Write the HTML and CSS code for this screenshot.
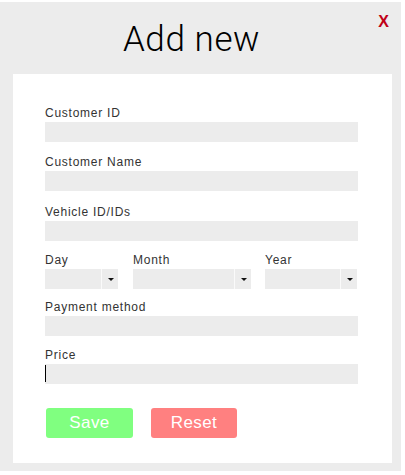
FILE: index.html
```html
<!DOCTYPE html>
<html>
<head>
<meta charset="utf-8">
<link rel="stylesheet" href="styles.css">
</head>
<body>
<div class="modal">
  <div class="header">
    <h1 class="title">Add new</h1>
    <span class="close">X</span>
  </div>
  <form class="panel">
    <div class="field f1">
      <label class="label">Customer ID</label>
      <input class="input" type="text">
    </div>
    <div class="field f2">
      <label class="label">Customer Name</label>
      <input class="input" type="text">
    </div>
    <div class="field f3">
      <label class="label">Vehicle ID/IDs</label>
      <input class="input" type="text">
    </div>
    <div class="date-row f4">
      <div class="date-col day">
        <label class="label">Day</label>
        <div class="select"><span class="arrow"></span></div>
      </div>
      <div class="date-col month">
        <label class="label">Month</label>
        <div class="select"><span class="arrow"></span></div>
      </div>
      <div class="date-col year">
        <label class="label">Year</label>
        <div class="select"><span class="arrow"></span></div>
      </div>
    </div>
    <div class="field f5">
      <label class="label">Payment method</label>
      <input class="input" type="text">
    </div>
    <div class="field f6">
      <label class="label">Price</label>
      <div class="input-wrap">
        <input class="input" type="text">
        <span class="caret"></span>
      </div>
    </div>
    <div class="buttons">
      <button type="button" class="btn save">Save</button>
      <button type="button" class="btn reset">Reset</button>
    </div>
  </form>
</div>
</body>
</html>
```
FILE: styles.css
```css
html, body {
  margin: 0;
  padding: 0;
  background: #ffffff;
}
body {
  font-family: "Liberation Sans", Arial, sans-serif;
}
.modal {
  margin: 2px 4px 0 0;
  height: 469px;
  background: #ececec;
  box-sizing: border-box;
  padding-top: 18px;
}
.header {
  position: relative;
  text-align: center;
  padding-right: 18px;
}
.title {
  margin: 0;
  font-family: Roboto, "Liberation Sans", sans-serif;
  font-size: 35px;
  font-weight: 300;
  letter-spacing: 0.6px;
  line-height: 40px;
  color: #000;
}
.close {
  position: absolute;
  right: 12px;
  top: -7px;
  color: #c00018;
  font-size: 16px;
  font-weight: bold;
  line-height: 18px;
}
.panel {
  margin: 14px 9px 0 13px;
  background: #ffffff;
  padding: 32px 34px 25px 32px;
  height: 389px;
  box-sizing: border-box;
}
.field, .date-row {
  display: flex;
  flex-direction: column;
}
.f1 { margin-bottom: 13px; }
.f2 { margin-bottom: 14px; }
.f3 { margin-bottom: 12px; }
.f4 { margin-bottom: 11px; }
.f5 { margin-bottom: 12px; }
.f6 { margin-bottom: 24px; }
.label {
  display: block;
  font-size: 12px;
  line-height: 14px;
  letter-spacing: 0.75px;
  color: #333;
  margin-bottom: 2px;
}
.input {
  display: block;
  width: 100%;
  height: 20px;
  box-sizing: border-box;
  border: none;
  background: #ececec;
  margin: 0;
  padding: 0;
  outline: none;
}
.input-wrap {
  position: relative;
}
.caret {
  position: absolute;
  left: 0;
  top: 1px;
  width: 1px;
  height: 17px;
  background: #000;
}
.date-row {
  flex-direction: row;
}
.date-col {
  display: flex;
  flex-direction: column;
}
.day { width: 73px; margin-right: 15px; }
.month { width: 118px; margin-right: 14px; }
.year { width: 92px; }
.select {
  height: 20px;
  background: #ececec;
  display: flex;
  justify-content: flex-end;
}
.arrow {
  width: 16px;
  border-left: 1px solid #fafafa;
  position: relative;
}
.arrow::after {
  content: "";
  position: absolute;
  left: 6px;
  top: 9px;
  border-left: 3px solid transparent;
  border-right: 3px solid transparent;
  border-top: 3px solid #111;
}
.buttons {
  display: flex;
  gap: 18px;
  padding-left: 1px;
}
.btn {
  width: 87px;
  height: 30px;
  border: none;
  border-radius: 3px;
  color: #ffffff;
  font-family: "Liberation Sans", Arial, sans-serif;
  font-size: 17px;
  letter-spacing: 0.4px;
  padding: 0;
}
.save { background: #80ff80; }
.reset { background: #ff8080; width: 86px; }
```
